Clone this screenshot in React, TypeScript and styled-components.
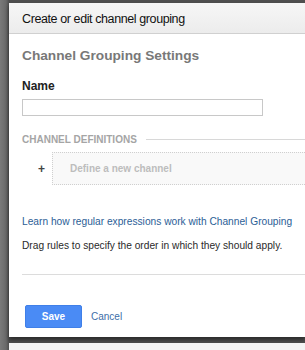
import React from "react";
import styled, { createGlobalStyle } from "styled-components";

const Global = createGlobalStyle`
  html, body { margin: 0; padding: 0; }
  body {
    background: #6f6f6f;
    font-family: "Liberation Sans", Arial, sans-serif;
    overflow: hidden;
  }
`;

const Page = styled.div`
  width: 305px;
  height: 350px;
  padding: 3px 0 0 9px;
  box-sizing: border-box;
  display: flex;
  flex-direction: column;
  background: linear-gradient(to right, #7a7a7a 0px, #6a6a6a 6px, #4f4f4f 9px);
`;

const Dialog = styled.div`
  flex-shrink: 0;
  background: #fff;
  height: 334px;
  display: flex;
  flex-direction: column;
  box-shadow: 0 3px 4px rgba(0, 0, 0, 0.45);
`;

const TitleBar = styled.div`
  flex-shrink: 0;
  height: 31px;
  box-sizing: border-box;
  padding: 1px 0 0 13px;
  display: flex;
  align-items: center;
  background: linear-gradient(#f6f6f6, #ececec);
  border-bottom: 1px solid #d0d0d0;
  font-size: 12.5px;
  letter-spacing: -0.4px;
  color: #111;
`;

const Body = styled.div`
  padding: 13px 0 0 13px;
  display: flex;
  flex-direction: column;
  flex: 1;
  & > * { flex-shrink: 0; }
`;

const Heading = styled.h2`
  margin: 0;
  font-size: 13.7px;
  font-weight: bold;
  color: #787878;
  line-height: 17px;
`;

const Label = styled.label`
  margin-top: 15px;
  font-size: 12px;
  font-weight: bold;
  color: #222;
  line-height: 14px;
`;

const Input = styled.input`
  margin-top: 6px;
  width: 241px;
  height: 17px;
  box-sizing: border-box;
  border: 1px solid #c8c8c8;
  padding: 0 4px;
`;

const SectionHeader = styled.div`
  margin-top: 17px;
  display: flex;
  align-items: center;
  gap: 9px;
  font-size: 10px;
  font-weight: bold;
  color: #a5a5a5;
  line-height: 13px;

  &::after {
    content: "";
    flex: 1;
    height: 1px;
    background: #d8d8d8;
  }
`;

const AddRow = styled.div`
  margin-top: 6px;
  display: flex;
  align-items: center;
`;

const Plus = styled.span`
  width: 30px;
  padding-left: 16px;
  box-sizing: border-box;
  font-size: 12px;
  font-weight: bold;
  color: #444;
`;

const DropZone = styled.div`
  flex: 1;
  height: 33px;
  box-sizing: border-box;
  border: 1px dotted #cfcfcf;
  border-right: none;
  background: #f9f9f9;
  display: flex;
  align-items: center;
  padding-left: 17px;
  font-size: 10px;
  font-weight: bold;
  color: #bdbdbd;
`;

const Link = styled.a`
  margin-top: 30px;
  font-size: 10.2px;
  color: #2b5e96;
  text-decoration: none;
  line-height: 13px;
  white-space: nowrap;
`;

const Note = styled.p`
  margin: 11px 0 0;
  font-size: 10.2px;
  color: #2a2a2a;
  line-height: 13px;
  white-space: nowrap;
`;

const Divider = styled.hr`
  margin: 22px 0 0;
  border: none;
  height: 1px;
  background: #dcdcdc;
`;

const Actions = styled.div`
  margin-top: 30px;
  display: flex;
  align-items: center;
  gap: 9px;
  padding-left: 3px;
`;

const SaveButton = styled.button`
  width: 57px;
  height: 23px;
  border: 1px solid #3f7fe8;
  border-radius: 2px;
  background: #4a8bf5;
  color: #fff;
  font-family: inherit;
  font-size: 10px;
  font-weight: bold;
  padding: 0;
`;

const CancelLink = styled.a`
  font-size: 10px;
  color: #3d6ea8;
  text-decoration: none;
`;

const Under = styled.div`
  margin-top: 6px;
  flex: 1;
  background: #f4f4f4;
`;

export default function App() {
  return (
    <>
      <Global />
      <Page>
        <Dialog>
          <TitleBar>Create or edit channel grouping</TitleBar>
          <Body>
            <Heading>Channel Grouping Settings</Heading>
            <Label>Name</Label>
            <Input type="text" />
            <SectionHeader>CHANNEL DEFINITIONS</SectionHeader>
            <AddRow>
              <Plus>+</Plus>
              <DropZone>Define a new channel</DropZone>
            </AddRow>
            <Link href="#">Learn how regular expressions work with Channel Grouping</Link>
            <Note>Drag rules to specify the order in which they should apply.</Note>
            <Divider />
            <Actions>
              <SaveButton>Save</SaveButton>
              <CancelLink href="#">Cancel</CancelLink>
            </Actions>
          </Body>
        </Dialog>
        <Under />
      </Page>
    </>
  );
}
